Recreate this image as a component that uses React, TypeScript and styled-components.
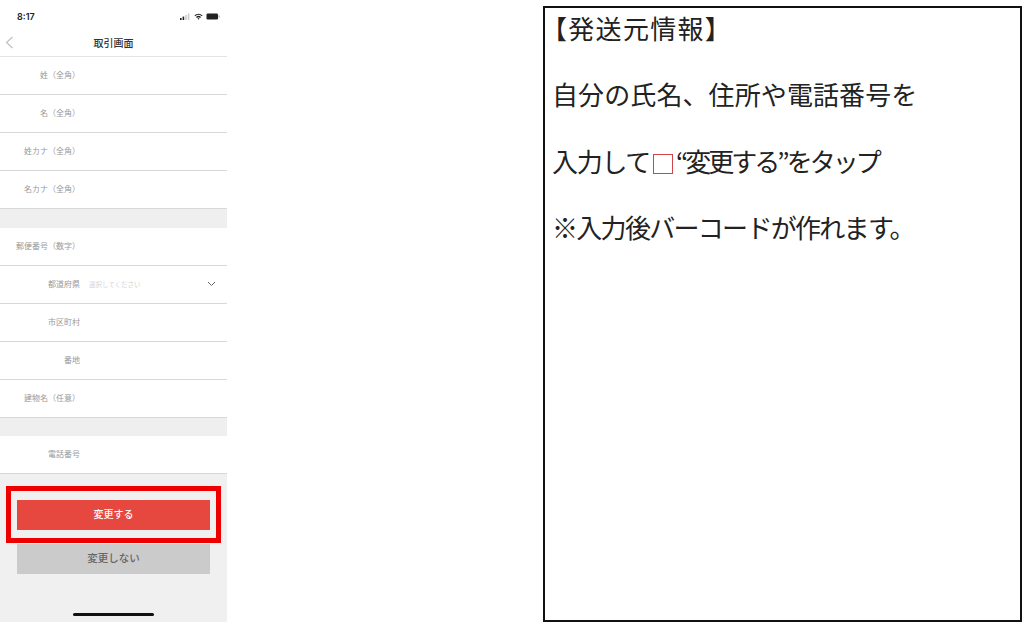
import React from 'react'
import styled, { createGlobalStyle } from 'styled-components'

const GlobalStyle = createGlobalStyle`
  html, body {
    margin: 0;
    padding: 0;
    background: #fff;
  }
  body {
    font-family: "Noto Sans CJK JP", "Liberation Sans", sans-serif;
  }
`
const Page = styled.div`
  width: 1024px;
  height: 622px;
  display: flex;
  overflow: hidden;
  background: #fff;
`
const Phone = styled.div`
  position: relative;
  width: 227px;
  height: 622px;
  display: flex;
  flex-direction: column;
  background: #f0f0f0;
`
const StatusBar = styled.div`
  height: 28px;
  box-sizing: border-box;
  padding: 4px 7px 0 17px;
  display: flex;
  align-items: center;
  justify-content: space-between;
  background: #fff;
`
const Clock = styled.span`
  font-family: "Inter", "Liberation Sans", sans-serif;
  font-size: 9px;
  font-weight: 600;
  color: #222;
`
const StatusIcons = styled.div`
  display: flex;
  align-items: center;
  gap: 3px;
`
const NavBar = styled.div`
  position: relative;
  height: 29px;
  display: flex;
  align-items: center;
  justify-content: center;
  background: #fff;
  border-bottom: 1px solid #e4e4e4;
  box-sizing: border-box;
`
const NavTitle = styled.span`
  font-size: 10px;
  font-weight: 500;
  color: #333;
`
const BackIcon = styled.svg`
  position: absolute;
  left: 5px;
  top: 8px;
`
const Row = styled.div`
  height: 38px;
  box-sizing: border-box;
  padding-bottom: 2px;
  display: flex;
  align-items: center;
  background: #fff;
  border-bottom: 1px solid #d8d8d8;
`
const Label = styled.span`
  width: 80px;
  text-align: right;
  font-size: 8px;
  color: #999;
  flex: none;
`
const Placeholder = styled.span`
  margin-left: 9px;
  flex: 1;
  font-size: 6.5px;
  color: #d4d4d4;
`
const Chevron = styled.svg`
  margin-right: 11px;
`
const Spacer = styled.div<{ $h: number }>`
  height: ${(p) => p.$h}px;
  background: #efefef;
`
const Footer = styled.div`
  flex: 1;
  display: flex;
  flex-direction: column;
  align-items: center;
  padding-top: 26px;
`
const Button = styled.div<{ $primary?: boolean }>`
  width: 193px;
  height: 30px;
  box-sizing: border-box;
  padding-bottom: 4px;
  display: flex;
  align-items: center;
  justify-content: center;
  font-size: ${(p) => (p.$primary ? '10px' : '10.5px')};
  font-weight: 500;
  color: ${(p) => (p.$primary ? '#fff' : '#666')};
  background: ${(p) => (p.$primary ? '#e6483f' : '#cbcbcb')};
  margin-bottom: ${(p) => (p.$primary ? '14px' : '0')};
`
const Highlight = styled.div`
  position: absolute;
  left: 6px;
  top: 486px;
  width: 215px;
  height: 57px;
  box-sizing: border-box;
  border: 5px solid #ee0000;
`
const HomeBar = styled.div`
  width: 81px;
  height: 3px;
  margin-top: 39px;
  border-radius: 2px;
  background: #111;
`
const Gap = styled.div`
  width: 316px;
`
const NoteBox = styled.div`
  width: 479px;
  height: 616px;
  margin-top: 6px;
  box-sizing: border-box;
  border: 2px solid #111;
  padding: 0 0 0 7px;
  font-family: "Noto Sans CJK JP", sans-serif;
  font-size: 26px;
  font-weight: 400;
  color: #222;
`
const NoteLine = styled.div<{ $indent?: number; $tracking?: number }>`
  height: 66.4px;
  line-height: 40px;
  white-space: nowrap;
  margin-left: ${(p) => p.$indent ?? 0}px;
  letter-spacing: ${(p) => p.$tracking ?? 0}px;
`
const Tight = styled.span`
  letter-spacing: -3px;
`
const RedSquare = styled.span`
  display: inline-block;
  width: 20px;
  height: 20px;
  box-sizing: border-box;
  margin: 0 3px 0 3px;
  vertical-align: -2px;
  border: 1px solid #d0454a;
`

const App = () => {
  return (
    <Page>
      <GlobalStyle />
      <Phone>
        <StatusBar>
          <Clock>8:17</Clock>
          <StatusIcons>
            <svg width="11" height="7" viewBox="0 0 11 7">
              <rect x="0" y="5" width="1.6" height="2" fill="#222" />
              <rect x="2.6" y="3.6" width="1.6" height="3.4" fill="#222" />
              <rect x="5.2" y="2" width="1.6" height="5" fill="#ccc" />
              <rect x="7.8" y="0.5" width="1.6" height="6.5" fill="#ccc" />
            </svg>
            <svg width="9" height="7" viewBox="0 0 9 7">
              <path d="M0.4 2.4 A6 6 0 0 1 8.6 2.4 L7.7 3.3 A4.7 4.7 0 0 0 1.3 3.3 Z" fill="#222" />
              <path d="M2 4 A3.6 3.6 0 0 1 7 4 L6.1 4.9 A2.4 2.4 0 0 0 2.9 4.9 Z" fill="#222" />
              <path d="M3.5 5.5 A1.5 1.5 0 0 1 5.5 5.5 L4.5 6.7 Z" fill="#222" />
            </svg>
            <svg width="14" height="7" viewBox="0 0 14 7">
              <rect x="0.5" y="0.5" width="11.5" height="6" rx="1.2" fill="#222" />
              <rect x="12.6" y="2.3" width="1" height="2.4" fill="#aaa" />
            </svg>
          </StatusIcons>
        </StatusBar>
        <NavBar>
          <BackIcon width="9" height="13" viewBox="0 0 9 13" fill="none" stroke="#bdbdbd" strokeWidth="1.1">
            <path d="M7.5 1 L1.5 6.5 L7.5 12" />
          </BackIcon>
          <NavTitle>取引画面</NavTitle>
        </NavBar>
        <Row><Label>姓（全角）</Label></Row>
        <Row><Label>名（全角）</Label></Row>
        <Row><Label>姓カナ（全角）</Label></Row>
        <Row><Label>名カナ（全角）</Label></Row>
        <Spacer $h={19} />
        <Row><Label>郵便番号（数字）</Label></Row>
        <Row>
          <Label>都道府県</Label>
          <Placeholder>選択してください</Placeholder>
          <Chevron width="9" height="6" viewBox="0 0 9 6" fill="none" stroke="#666" strokeWidth="1">
            <path d="M1 1 L4.5 4.5 L8 1" />
          </Chevron>
        </Row>
        <Row><Label>市区町村</Label></Row>
        <Row><Label>番地</Label></Row>
        <Row><Label>建物名（任意）</Label></Row>
        <Spacer $h={18} />
        <Row><Label>電話番号</Label></Row>
        <Footer>
          <Button $primary>変更する</Button>
          <Button>変更しない</Button>
          <HomeBar />
        </Footer>
        <Highlight />
      </Phone>
      <Gap />
      <NoteBox>
        <NoteLine $indent={-11} $tracking={1.3}>【発送元情報】</NoteLine>
        <NoteLine $tracking={0.1}>自分の氏名、住所や電話番号を</NoteLine>
        <NoteLine $tracking={-1.3}>入力して<RedSquare /><Tight>“変更する”をタップ</Tight></NoteLine>
        <NoteLine $tracking={-1.7}>※入力後バーコードが作れます。</NoteLine>
      </NoteBox>
    </Page>
  )
}

export default App
